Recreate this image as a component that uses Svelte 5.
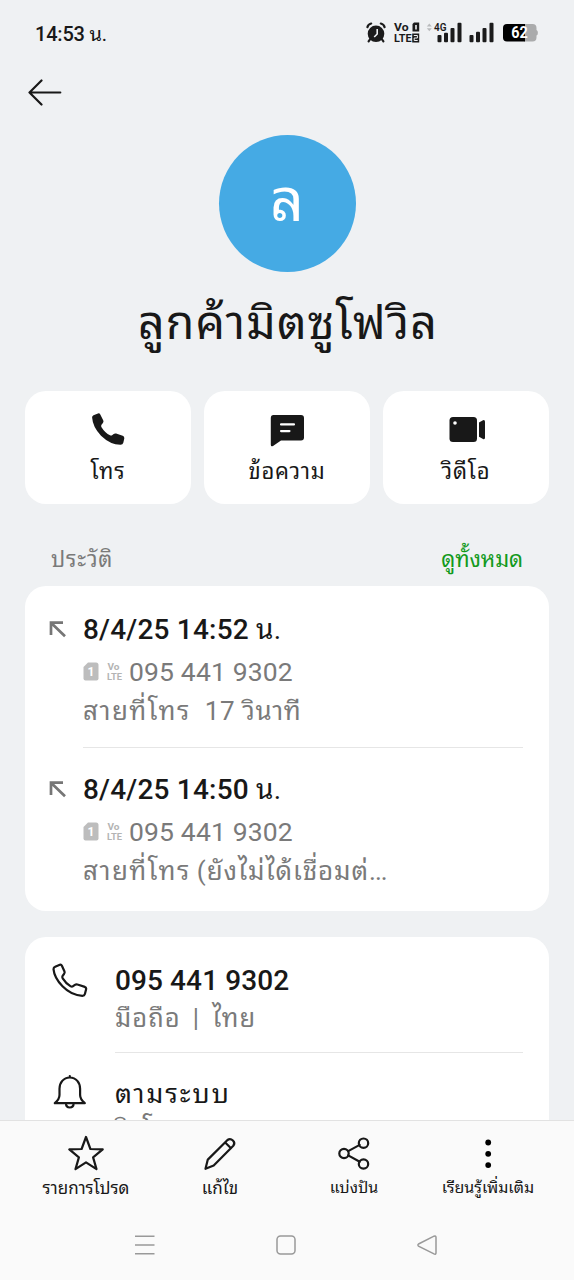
<script>
	const actions = [
		{ id: 'call', label: 'โทร' },
		{ id: 'message', label: 'ข้อความ' },
		{ id: 'video', label: 'วิดีโอ' }
	];

	const calls = [
		{ date: '8/4/25 14:52', number: '095 441 9302', type: 'สายที่โทร', result: '17 วินาที' },
		{ date: '8/4/25 14:50', number: '095 441 9302', type: 'สายที่โทร', result: '(ยังไม่ได้เชื่อมต่', cut: true }
	];

	const tools = [
		{ id: 'favorite', label: 'รายการโปรด' },
		{ id: 'edit', label: 'แก้ไข' },
		{ id: 'share', label: 'แบ่งปัน' },
		{ id: 'more', label: 'เรียนรู้เพิ่มเติม' }
	];
</script>

<div class="screen">
	<header class="status">
		<div class="time">14:53 <span class="thai">น.</span></div>
		<svg class="status-icons" width="174" height="28" viewBox="0 0 174 28">
			<g fill="#1b1b1b">
				<circle cx="10" cy="14.8" r="8.3" />
				<path d="M4.6 19.5 2.6 22.4M15.4 19.5l2 2.9M1.4 8.2Q1.9 5.4 5.2 4.5M18.6 8.2Q18.1 5.4 14.8 4.5" fill="none" stroke="#1b1b1b" stroke-width="2.2" stroke-linecap="round" />
				<path d="M11.2 10v5l-3 3" fill="none" stroke="#eff1f3" stroke-width="1.6" />
				<text x="28" y="12" class="lte" textLength="14.5" lengthAdjust="spacingAndGlyphs">Vo</text>
				<text x="28" y="23.2" class="lte" textLength="17.5" lengthAdjust="spacingAndGlyphs">LTE</text>
				<path d="M48 3.500h5.200v9H46.500V5zM46.200 14.500h7v9h-7z" />
				<path d="M49.200 6h1.600v4.500h-1.600z" fill="#eff1f3" />
				<path d="M47.800 16.500h3.600v2.500h-3.200v2.500h3.500" fill="none" stroke="#eff1f3" stroke-width="1" />
				<path d="m60.800 7.500 2.500-3 2.500 3zM60.800 9.200h5l-2.500 3z" fill="#b9bbbd" />
				<text x="68" y="11.600" class="gen" textLength="12.500" lengthAdjust="spacingAndGlyphs">4G</text>
				<rect x="71.500" y="16" width="4" height="7.200" rx="1" />
				<rect x="78" y="13.800" width="4" height="9.400" rx="1" />
				<rect x="84.500" y="9" width="4" height="14.200" rx="1" />
				<rect x="91.500" y="3.800" width="4" height="19.400" rx="1" />
				<rect x="103.500" y="16" width="4" height="7.200" rx="1" />
				<rect x="110" y="12.800" width="4" height="10.400" rx="1" />
				<rect x="116.500" y="9" width="4" height="14.200" rx="1" />
				<rect x="123.500" y="3.800" width="4" height="19.400" rx="1" />
			</g>
			<path d="M158 5h8.500q4 0 4 4v2q1.400.4 1.400 2.800t-1.400 2.800v2q0 4-4 4H158z" fill="#aaabac" />
			<path d="M159 5h-18q-4 0-4 4v9.600q0 4 4 4h18z" fill="#000" />
			<text x="145.300" y="19.400" class="level" textLength="16.500" lengthAdjust="spacingAndGlyphs">62</text>
		</svg>
	</header>

	<nav class="back">
		<svg width="34" height="28" viewBox="0 0 34 28" aria-label="ย้อนกลับ">
			<path d="M32.300 13.500H1.500M13.500 1.500l-12 12 12 12" class="line" />
		</svg>
	</nav>

	<section class="profile">
		<div class="avatar">ล</div>
		<h1>ลูกค้ามิตซูโฟวิล</h1>
	</section>

	<div class="actions">
		{#each actions as action (action.id)}
			<button type="button" class="action">
				<svg width="40" height="36" viewBox="0 0 40 36" fill="#181818">
					{#if action.id === 'call'}
						<path d="M5.500 4.300 10 2.400q1.500-.5 2.300 1l3 6.200q.6 1.400-.4 2.400l-1.400 1.700q-.8 1.200 0 2.600 3.600 5.800 8.500 8 1.400.6 2.400-.4l1.300-1q1.100-.8 2.400-.3l6.600 2.200q1.900.7 1.600 2.600l-1 4.400q-.5 1.900-2.700 1.900Q22.500 33.800 13 24.700 4.800 16.300 4.100 6.600 4 5 5.500 4.300z" />
					{:else if action.id === 'message'}
						<path d="M6.500 4H34q3 0 3 3v19.500q0 3-3 3H14L6 35q-2.200 1-2.200-1.200V7q0-3 2.700-3z" />
						<path d="M14 13.400h13M14 20.100h8.500" fill="none" stroke="#fff" stroke-width="2.100" stroke-linecap="round" />
					{:else}
						<rect x="3.500" y="6" width="27.500" height="25" rx="3.500" />
						<path d="m33 11.500 4-2.300q2-.6 2 1.600v16q0 2-2 1.300l-4-2.400z" />
						<circle cx="9" cy="12" r="1.800" fill="#fff" />
					{/if}
				</svg>
				<span>{action.label}</span>
			</button>
		{/each}
	</div>

	<div class="section-head">
		<span>ประวัติ</span>
		<a href="#all">ดูทั้งหมด</a>
	</div>

	<section class="card history">
		{#each calls as call}
			<article class="entry">
				<svg class="direction" width="17" height="17" viewBox="0 0 17 17">
					<path d="M2 14V1.700H14M2.500 2.200l13.500 13" fill="none" stroke="#767676" stroke-width="2.700" />
				</svg>
				<div class="entry-body">
					<div class="date">{call.date} <span class="thai">น.</span></div>
					<div class="number">
						<svg width="40" height="20" viewBox="0 0 40 20">
							<path d="M5 .5h8q2.500 0 2.500 2.500v13.500q0 2-2 2H2.500q-2 0-2-2V5z" fill="#bdbdbd" />
							<text x="4.600" y="14" class="sim">1</text>
							<text x="24.500" y="8" class="volte" textLength="12" lengthAdjust="spacingAndGlyphs">Vo</text>
							<text x="24" y="17.800" class="volte" textLength="15" lengthAdjust="spacingAndGlyphs">LTE</text>
						</svg>
						<span>{call.number}</span>
					</div>
					<div class="detail" class:cut={call.cut}>
						<span class="type">{call.type}</span>
						<span>{call.result}{#if call.cut}<span class="dots">...</span>{/if}</span>
					</div>
				</div>
			</article>
		{/each}
	</section>

	<section class="card info">
		<article class="row">
			<svg width="36" height="36" viewBox="0 0 36 36">
				<path d="m3.200 4.800 4.600-2q1.400-.5 2.100.9l2.600 5.800q.5 1.300-.5 2.500l-1.400 1.900q-.7 1.200.1 2.500 3.200 5.200 8 8 1.300.7 2.400-.2l1.800-1.300q1.200-.9 2.600-.4l7.300 2.400q1.700.7 1.300 2.400l-1.200 4.700q-.5 1.800-2.500 1.800Q19.500 33.500 10.500 24.300 2.300 16 1.500 7.200 1.500 5.500 3.200 4.800z" class="line" />
			</svg>
			<div class="row-body">
				<div class="phone">095 441 9302</div>
				<div class="kind"><span>มือถือ</span><span>|</span><span>ไทย</span></div>
			</div>
		</article>
		<article class="row">
			<svg width="36" height="36" viewBox="0 0 36 36">
				<path d="M2.800 29.200h30q-4.700-4-4.700-8.200v-6.200c0-6-3.900-11.300-10.300-11.300S7.500 8.800 7.500 14.800V21q0 4.200-4.700 8.200zM17.800 3.300V2M14 29.600c0 5.200 7.600 5.200 7.600 0" class="line" />
			</svg>
			<div class="row-body">
				<div class="ringtone">ตามระบบ</div>
				<div class="kind">ริงโทน</div>
			</div>
		</article>
	</section>

	<footer>
		<div class="tools">
			{#each tools as tool (tool.id)}
				<button type="button" class="tool {tool.id}">
					<svg width="38" height="38" viewBox="0 0 38 38">
						{#if tool.id === 'favorite'}
							<path d="m19 3 4.400 12 12.300.4-9.600 8 3.400 11.700L19 28.300 8.500 35.100l3.400-11.700-9.600-8L14.600 15z" class="line" />
						{:else if tool.id === 'edit'}
							<path d="m4.500 34.800 2.300-9.200L26.500 6q2.800-2 5.400.5t.4 5.200L12.700 31.500zM24.200 8.500l5.800 5.800" class="line" />
						{:else if tool.id === 'share'}
							<path d="m13.200 17.100 11.500-6.200m-11.500 10.500 11.500 6.400" class="line" />
							<circle cx="9" cy="19.500" r="4.700" class="line" />
							<circle cx="28.500" cy="9.200" r="4.700" class="line" />
							<circle cx="28.500" cy="30" r="4.700" class="line" />
						{:else}
							<circle cx="19.200" cy="8.500" r="2.900" />
							<circle cx="19.200" cy="19.800" r="2.900" />
							<circle cx="19.200" cy="31.100" r="2.900" />
						{/if}
					</svg>
					<span>{tool.label}</span>
				</button>
			{/each}
		</div>
		<div class="system">
			<svg width="20" height="20" viewBox="0 0 20 20"><path d="M0 1.300h19.500M0 10h19.500M0 18.800h19.500" /></svg>
			<svg width="20" height="20" viewBox="0 0 20 20"><rect x="1" y="1" width="18" height="18" rx="3.500" /></svg>
			<svg width="20" height="20" viewBox="0 0 20 20"><path d="M1.500 9 17 1.200q2-.8 2 1.300v15.200q0 2-2 1.200L1.500 11.200q-1.200-1.100 0-2.200z" /></svg>
		</div>
	</footer>
</div>

<style>
	:global(body) {
		margin: 0;
		background: #eff1f3;
	}

	.screen {
		display: flex;
		flex-direction: column;
		width: 574px;
		height: 1280px;
		overflow: hidden;
		background: #eff1f3;
		color: #181818;
		font-family: Roboto, 'Noto Sans Thai Looped', 'Noto Looped Thai', Loma, Garuda, Waree, 'Noto Sans', sans-serif;
	}

	svg {
		display: block;
		flex: none;
	}

	button {
		padding: 0;
		border: 0;
		background: transparent;
		color: inherit;
		font: inherit;
	}

	.line {
		fill: none;
		stroke: #181818;
		stroke-width: 2.2;
		stroke-linecap: round;
		stroke-linejoin: round;
	}

	.thai {
		font-weight: 400;
	}

	.status {
		display: flex;
		flex: none;
		justify-content: space-between;
		height: 59px;
		padding: 19px 34px 0 35px;
		box-sizing: border-box;
	}

	.time {
		font-size: 20px;
		font-weight: 500;
		line-height: 30px;
		letter-spacing: -0.2px;
	}

	.lte {
		font-size: 10.8px;
		font-weight: 700;
	}

	.gen {
		font-size: 11.5px;
		font-weight: 600;
	}

	.level {
		fill: #fff;
		font-size: 16px;
		font-weight: 700;
	}

	.back {
		flex: none;
		padding: 20px 28px 28px;
	}

	.profile {
		display: flex;
		flex: none;
		flex-direction: column;
		align-items: center;
		height: 256px;
	}

	.avatar {
		width: 137px;
		height: 137px;
		border-radius: 50%;
		background: #45aae4;
		color: #fff;
		font-size: 59px;
		line-height: 132px;
		text-align: center;
	}

	h1 {
		margin: 21px 0 0 2px;
		font-size: 46.5px;
		font-weight: 400;
		line-height: 60px;
		letter-spacing: 1.1px;
		white-space: nowrap;
	}

	.actions {
		display: grid;
		flex: none;
		grid-template-columns: repeat(3, 1fr);
		gap: 13px;
		height: 113px;
		padding: 0 25px;
	}

	.action {
		display: flex;
		flex-direction: column;
		gap: 10px;
		align-items: center;
		padding-top: 20px;
		border-radius: 21px;
		background: #fff;
		font-size: 22px;
		line-height: 30px;
		letter-spacing: 0.8px;
	}

	.section-head {
		display: flex;
		flex: none;
		justify-content: space-between;
		height: 82px;
		padding: 40px 51px 0;
		box-sizing: border-box;
		color: #7a7a7a;
		font-size: 22px;
		line-height: 32px;
		letter-spacing: 0.8px;
	}

	.section-head a {
		color: #129a1c;
		letter-spacing: -0.1px;
		text-decoration: none;
	}

	.card {
		flex: none;
		margin: 0 25px;
		border-radius: 21px;
		background: #fff;
	}

	.history {
		height: 325px;
	}

	.entry {
		display: flex;
		gap: 17px;
		padding: 26px 26px 0 24px;
	}

	.entry + .entry {
		padding-top: 24px;
	}

	.direction {
		margin-top: 9px;
	}

	.entry-body {
		flex: 1;
		padding-bottom: 17px;
	}

	.entry:first-child .entry-body {
		border-bottom: 1px solid #e6e6e6;
	}

	.date {
		margin-bottom: 5px;
		font-size: 28px;
		font-weight: 500;
		line-height: 36px;
		letter-spacing: 0.2px;
	}

	.number {
		display: flex;
		align-items: center;
		gap: 6px;
		color: #7a7a7a;
		font-size: 26.5px;
		line-height: 38px;
		letter-spacing: 0.15px;
	}

	.sim {
		fill: #fff;
		font-size: 12px;
		font-weight: 700;
	}

	.volte {
		fill: #b4b4b4;
		font-size: 9.2px;
		font-weight: 700;
		letter-spacing: 0;
	}

	.detail {
		display: flex;
		gap: 14px;
		margin-top: 1px;
		color: #7a7a7a;
		font-size: 26px;
		line-height: 38px;
		letter-spacing: 0.6px;
		white-space: nowrap;
	}

	.detail.cut {
		gap: 6px;
		letter-spacing: 0.9px;
	}

	.detail .type {
		letter-spacing: 1.5px;
	}

	.dots {
		letter-spacing: -1px;
	}

	.info {
		height: 240px;
		margin-top: 26px;
	}

	.row {
		display: flex;
		gap: 27px;
		padding: 25px 26px 0 27px;
	}

	.row + .row {
		padding-top: 21px;
	}

	.row-body {
		flex: 1;
		height: 90px;
	}

	.row:first-child .row-body {
		border-bottom: 1px solid #e6e6e6;
	}

	.phone {
		font-size: 28px;
		font-weight: 500;
		line-height: 38px;
		letter-spacing: 0.1px;
	}

	.ringtone {
		font-size: 26.5px;
		line-height: 40px;
		letter-spacing: 2px;
	}

	.kind {
		display: flex;
		gap: 12px;
		color: #7a7a7a;
		font-size: 25.5px;
		line-height: 36px;
		letter-spacing: 1.1px;
	}

	.ringtone + .kind {
		margin-top: -3px;
	}

	footer {
		position: absolute;
		top: 1120px;
		left: 0;
		width: 574px;
		height: 160px;
		border-top: 1px solid #e2e2e2;
		box-sizing: border-box;
		background: #fafafa;
	}

	.tools {
		display: grid;
		grid-template-columns: repeat(4, 134px);
		justify-content: center;
		padding-top: 13px;
	}

	.tool {
		display: flex;
		flex-direction: column;
		gap: 1px;
		align-items: center;
		height: 80px;
		font-size: 17px;
		line-height: 30px;
		white-space: nowrap;
	}

	.tool.share,
	.tool.more {
		font-size: 16px;
	}

	.system {
		display: flex;
		justify-content: space-between;
		padding: 21px 137px 0 135px;
	}

	.system svg {
		fill: none;
		stroke: #999;
		stroke-width: 1.5;
	}
</style>
